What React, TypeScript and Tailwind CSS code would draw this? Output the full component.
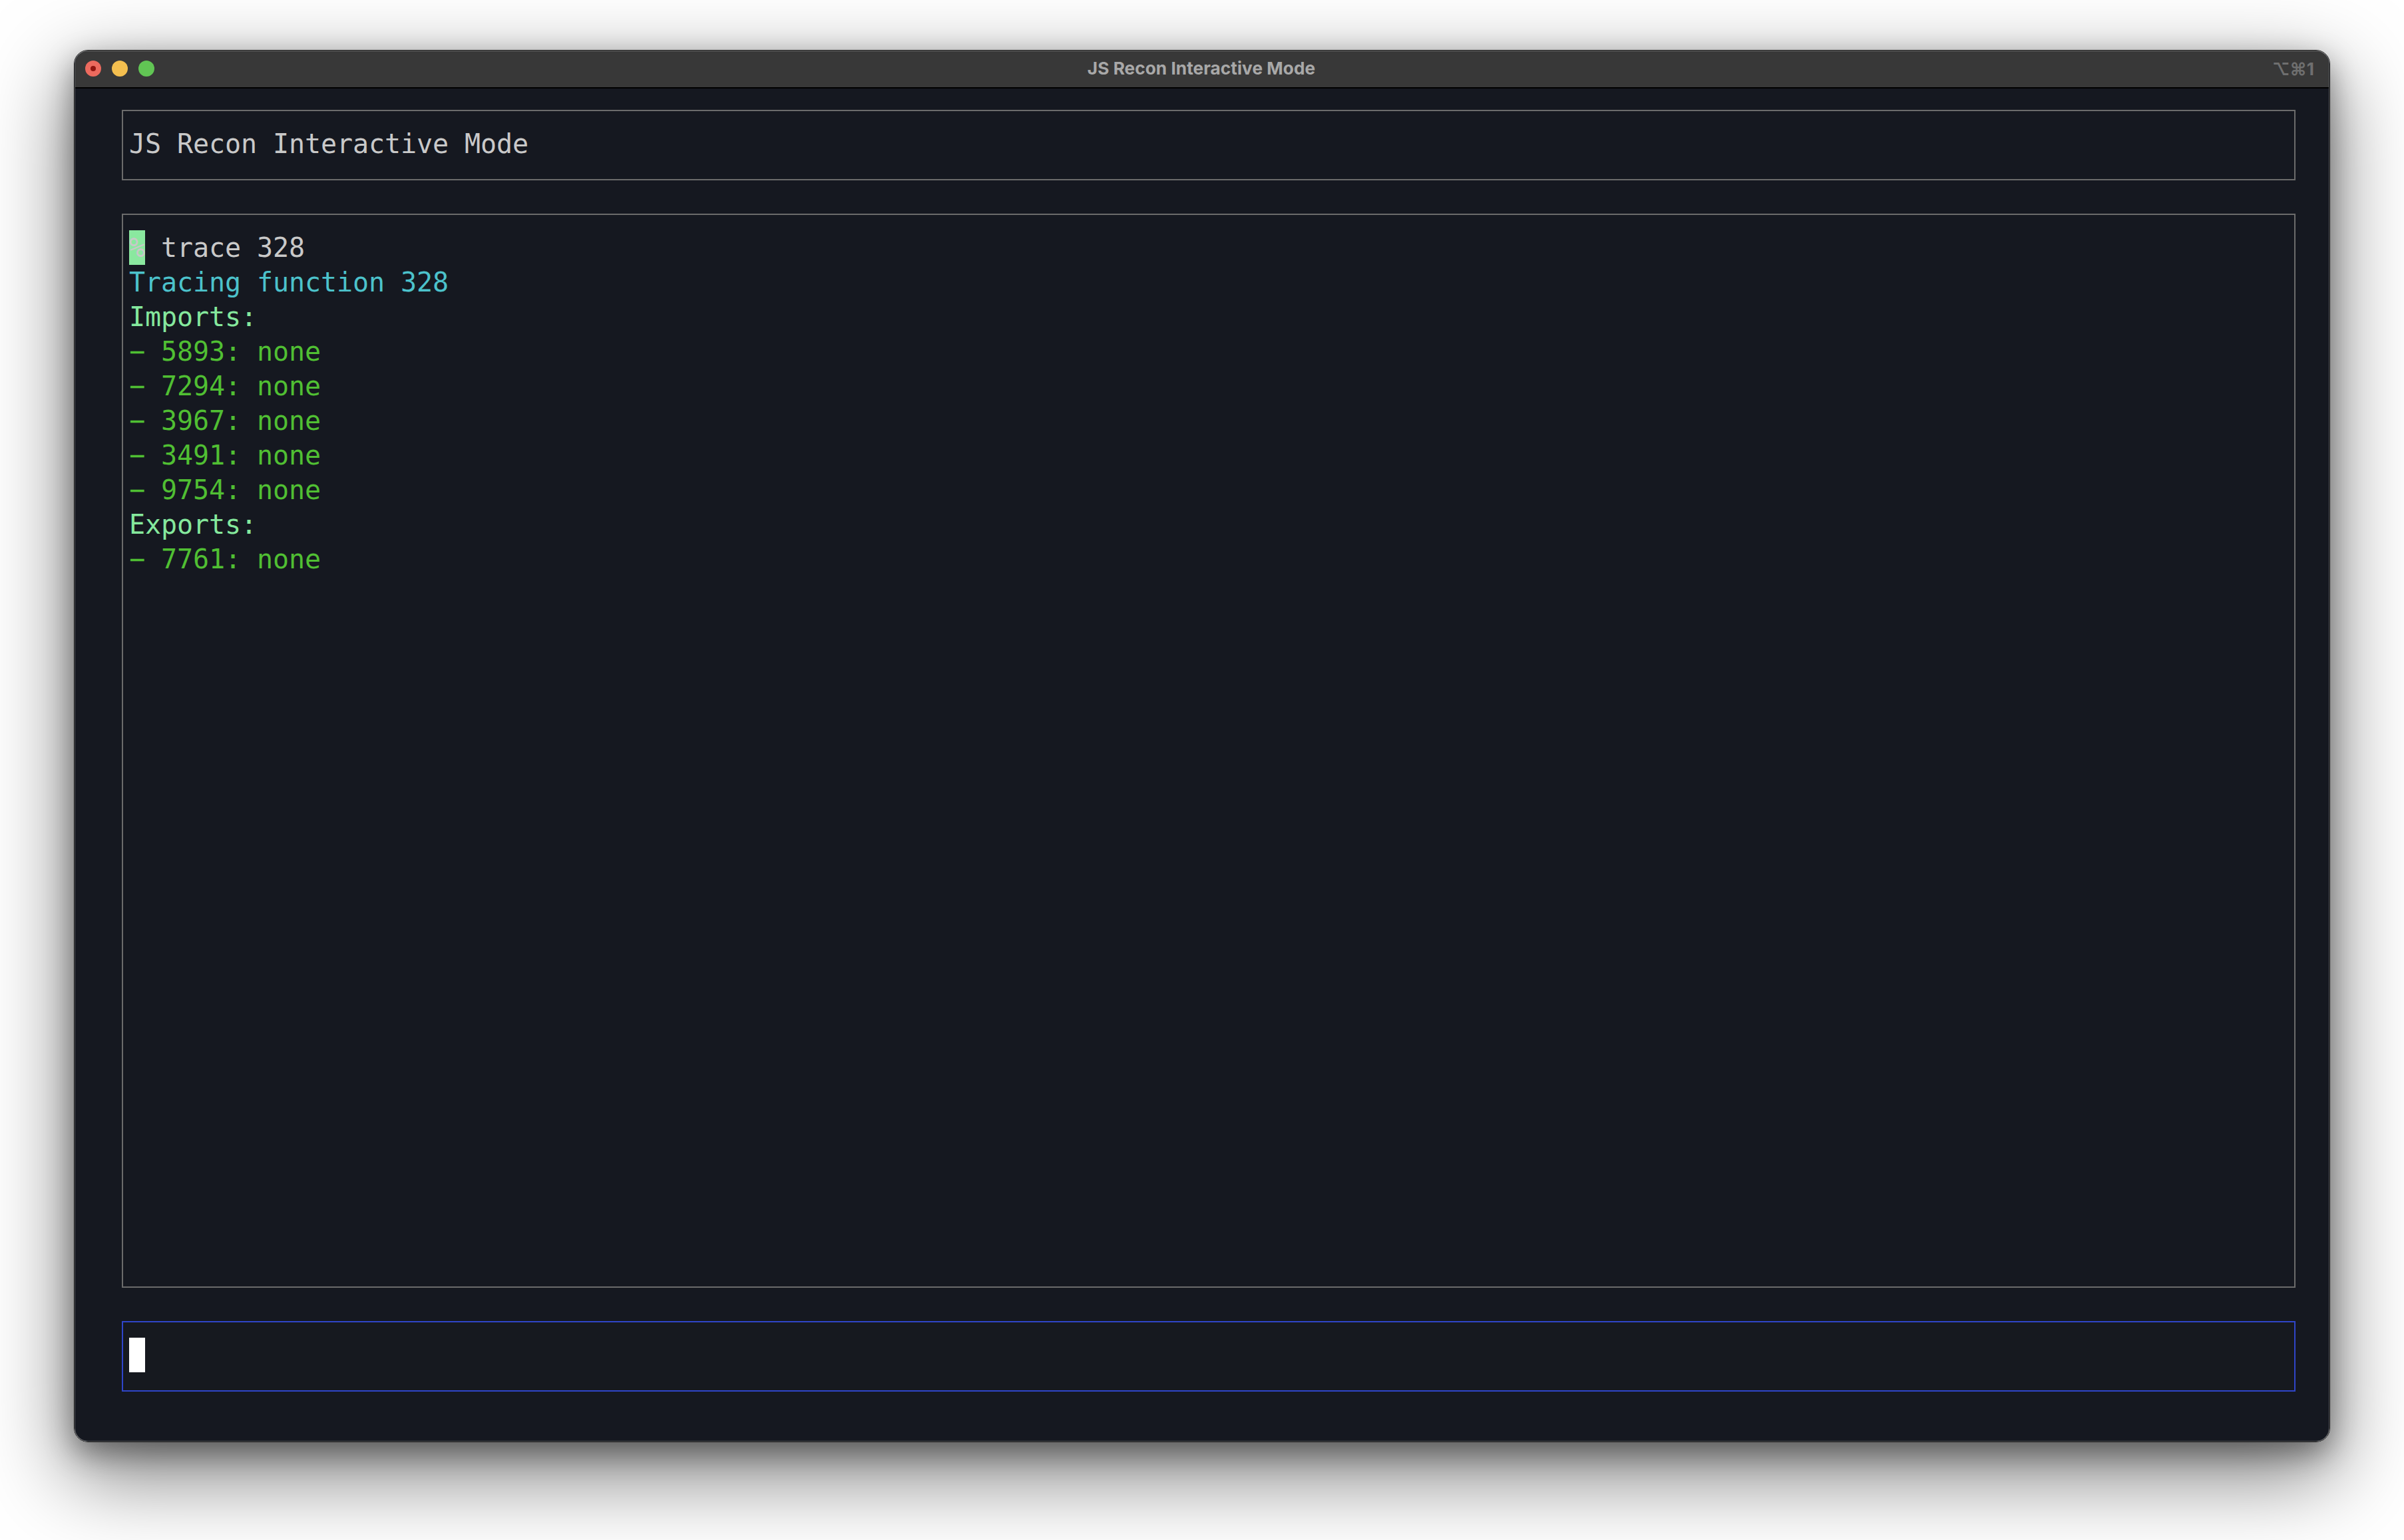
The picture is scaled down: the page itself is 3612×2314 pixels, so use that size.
const mono = "font-['DejaVu_Sans_Mono',monospace] text-[40px] leading-[52px] tracking-[-0.08px] whitespace-pre";

const imports = ['5893', '7294', '3967', '3491', '9754'];
const exports_ = ['7761'];

const DepLine = ({ id }: { id: string }) => (
  <div className="text-[#50bf33]">− {id}: none</div>
);

export default function App() {
  return (
    <div className="h-[2314px] w-[3612px] overflow-hidden bg-white pl-[111px] pt-[75px]">
      <div className="h-[2092px] w-[3390px] rounded-[21px] border border-[#111111] shadow-[0_44px_124px_8px_rgba(0,0,0,0.5),0_16px_44px_rgba(0,0,0,0.38)]">
        <div className="flex h-full flex-col overflow-hidden rounded-[20px] border border-t-[#6e6e6e] border-x-[#55575b] border-b-[#4f5155] bg-[#151820]">
          <div className="flex h-[56px] shrink-0 items-center justify-between border-b-2 border-black bg-[#383838] pb-[2px] pl-[15px] pr-[22px]">
            <div className="flex w-[200px] gap-[16px]">
              <div className="flex h-[24px] w-[24px] items-center justify-center rounded-full bg-[#ec6a5e]">
                <div className="h-[8px] w-[8px] rounded-full bg-[#8f1510]" />
              </div>
              <div className="h-[24px] w-[24px] rounded-full bg-[#f4bf4f]" />
              <div className="h-[24px] w-[24px] rounded-full bg-[#61c554]" />
            </div>
            <div className="pl-[5px] font-['Inter',sans-serif] text-[26.3px] font-bold text-[#a8a8a8]">JS Recon Interactive Mode</div>
            <div className="flex w-[200px] justify-end font-['Inter',sans-serif] text-[26px] font-bold text-[#6f6f6f]">⌥⌘1</div>
          </div>
          <div className={`flex flex-1 flex-col pl-[70px] pr-[50px] pt-[32px] text-[#c9c9c9] ${mono}`}>
            <div className="flex h-[106px] shrink-0 items-center border-2 border-[#6b6b6b] px-[9px] pb-[4px]">JS Recon Interactive Mode</div>
            <div className="mt-[50px] h-[1614px] shrink-0 border-2 border-[#6b6b6b] px-[9px] pt-[23px]">
              <div className="flex">
                <span className="w-[24px] bg-[#8ae89f] text-[#c8c8c8]">%</span>
                <span> trace 328</span>
              </div>
              <div className="text-[#4cc2cb]">Tracing function 328</div>
              <div className="text-[#85e89d]">Imports:</div>
              {imports.map((id) => <DepLine key={id} id={id} />)}
              <div className="text-[#85e89d]">Exports:</div>
              {exports_.map((id) => <DepLine key={id} id={id} />)}
            </div>
            <div className="mt-[50px] flex h-[106px] shrink-0 items-center border-2 border-[#2f45c8] bg-[#16191f] px-[9px]">
              <span className="mb-[4px] h-[52px] w-[24px] bg-white" />
            </div>
          </div>
        </div>
      </div>
    </div>
  );
}
